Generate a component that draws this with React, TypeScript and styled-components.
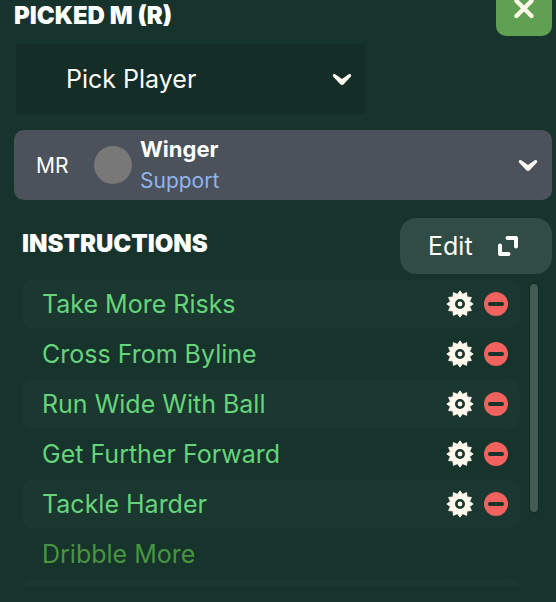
import React from "react";
import styled, { createGlobalStyle } from "styled-components";

const GlobalStyle = createGlobalStyle`
  *, *::before, *::after { box-sizing: border-box; }
  body {
    margin: 0;
    background: #16332c;
    color: #fffdf8;
    font-family: Inter, "Liberation Sans", sans-serif;
    font-size: 25px;
  }
  button, select { font: inherit; color: inherit; border: 0; margin: 0; cursor: pointer; }
  svg { display: block; flex: none; }
`;

const Panel = styled.main`
  padding: 0 4px 16px 14px;
  overflow: hidden;
`;

const Header = styled.header`
  display: flex;
  justify-content: space-between;
  align-items: flex-end;
  height: 36px;
  overflow: hidden;
`;

const Title = styled.h1`
  margin: 0;
  padding-bottom: 6px;
  font-size: 24px;
  line-height: 28px;
  font-weight: 900;
  color: #fff;
`;

const SectionTitle = styled(Title)`
  padding-bottom: 4px;
`;

const CloseButton = styled.button`
  display: grid;
  place-items: center;
  width: 56px;
  height: 56px;
  flex: none;
  padding: 0;
  border-radius: 10px;
  background: #5fa052;
`;

const PlayerPicker = styled.label`
  display: grid;
  align-items: center;
  width: 65%;
  height: 70px;
  margin: 8px 0 16px 2px;
  background: #142d27;

  > * { grid-area: 1 / 1; }
  > svg { justify-self: end; margin-right: 14px; pointer-events: none; }
`;

const PlayerSelect = styled.select`
  appearance: none;
  width: 100%;
  height: 100%;
  padding: 0 50px;
  background: transparent;
`;

const RoleButton = styled.button`
  display: flex;
  align-items: center;
  width: 100%;
  height: 70px;
  padding: 0 14px 0 22px;
  border-radius: 10px;
  background: #4b525c;
  text-align: left;
`;

const Position = styled.span`
  width: 58px;
  font-size: 21px;
`;

const Avatar = styled.span`
  width: 38px;
  height: 38px;
  border-radius: 50%;
  background: #787878;
`;

const RoleText = styled.span`
  display: flex;
  flex: 1;
  flex-direction: column;
  padding-left: 8px;
  font-size: 21px;
  line-height: 31px;
`;

const RoleName = styled.strong`
  font-size: 22px;
  font-weight: 700;
  color: #fff;
`;

const Duty = styled.span`
  color: #8fb4ee;
`;

const SectionHeader = styled.div`
  display: flex;
  justify-content: space-between;
  align-items: center;
  margin: 18px 0 6px;
  padding-left: 8px;
`;

const EditButton = styled.button`
  display: flex;
  align-items: center;
  justify-content: space-between;
  width: 152px;
  height: 56px;
  padding: 0 34px 0 28px;
  border-radius: 16px;
  background: #304c44;
`;

const ScrollArea = styled.div`
  display: flex;
  gap: 10px;
  height: 306px;
  padding: 0 14px 0 8px;
  overflow: hidden;
`;

const List = styled.ul`
  display: flex;
  flex: 1;
  flex-direction: column;
  gap: 2px;
  margin: 0;
  padding: 0;
  list-style: none;
`;

const Row = styled.li<{ $dim?: boolean }>`
  display: flex;
  align-items: center;
  gap: 10px;
  flex: none;
  height: 48px;
  padding: 0 12px 0 20px;
  border-radius: 10px;
  color: ${(p) => (p.$dim ? "#489540" : "#66d47a")};

  &:nth-child(odd) { background: #1a3830; }
`;

const RowLabel = styled.span`
  flex: 1;
  white-space: nowrap;
`;

const IconButton = styled.button`
  display: grid;
  place-items: center;
  padding: 0;
  background: transparent;
  color: #fff8ec;
`;

const ScrollThumb = styled.div`
  width: 8px;
  height: 228px;
  margin-top: 4px;
  border-radius: 4px;
  background: #415b53;
  box-shadow: 0 0 0 1px #122a24;
`;

const Chevron = () => (
  <svg width="20" height="14" viewBox="0 0 20 14" aria-hidden="true">
    <path
      d="M1.1 4.4C.1 2.9 1.7 1.2 3.2 2.2L10 7l6.8-4.8c1.5-1 3.1.7 2.1 2.2l-7.2 7.8c-1 1-2.4 1-3.4 0Z"
      fill="#fffaf2"
    />
  </svg>
);

const CloseIcon = () => (
  <svg width="22" height="22" viewBox="0 0 22 22" aria-hidden="true">
    <path d="M3.5 4 18.5 19M18.5 4 3.5 19" stroke="#fff8e8" strokeWidth="4.4" strokeLinecap="round" />
  </svg>
);

const ExpandIcon = () => (
  <svg width="20" height="20" viewBox="0 0 20 20" fill="none" aria-hidden="true">
    <path
      d="M9.5 2H18v8.5M2 9.5V18h8.5"
      stroke="#fff"
      strokeWidth="4"
      strokeLinecap="round"
      strokeLinejoin="round"
    />
  </svg>
);

const gearOutline = Array.from({ length: 24 }, (_, i) => {
  const radius = i % 2 ? 10 : 13.2;
  const angle = (i * Math.PI) / 12 - Math.PI / 2;
  return `${(14 + radius * Math.cos(angle)).toFixed(2)},${(14 + radius * Math.sin(angle)).toFixed(2)}`;
}).join(" ");

const GearIcon = () => (
  <svg width="28" height="28" viewBox="0 0 28 28" aria-hidden="true">
    <polygon points={gearOutline} fill="currentColor" stroke="currentColor" strokeWidth="0.8" strokeLinejoin="round" />
    <circle cx="14" cy="14" r="3.7" fill="currentColor" stroke="#1a352d" strokeWidth="2.6" />
  </svg>
);

const RemoveIcon = () => (
  <svg width="24" height="24" viewBox="0 0 24 24" aria-hidden="true">
    <circle cx="12" cy="12" r="12" fill="#ef625d" />
    <path d="M6 12h12" stroke="#17332c" strokeWidth="4" strokeLinecap="round" />
  </svg>
);

const instructions = [
  { name: "Take More Risks", active: true },
  { name: "Cross From Byline", active: true },
  { name: "Run Wide With Ball", active: true },
  { name: "Get Further Forward", active: true },
  { name: "Tackle Harder", active: true },
  { name: "Dribble More", active: false },
];

export default function App() {
  return (
    <>
      <GlobalStyle />
      <Panel>
        <Header>
          <Title>PICKED M (R)</Title>
          <CloseButton aria-label="Close">
            <CloseIcon />
          </CloseButton>
        </Header>
        <PlayerPicker>
          <PlayerSelect aria-label="Player">
            <option>Pick Player</option>
          </PlayerSelect>
          <Chevron />
        </PlayerPicker>
        <RoleButton aria-haspopup="listbox">
          <Position>MR</Position>
          <Avatar />
          <RoleText>
            <RoleName>Winger</RoleName>
            <Duty>Support</Duty>
          </RoleText>
          <Chevron />
        </RoleButton>
        <SectionHeader>
          <SectionTitle as="h2">INSTRUCTIONS</SectionTitle>
          <EditButton>
            Edit
            <ExpandIcon />
          </EditButton>
        </SectionHeader>
        <ScrollArea>
          <List>
            {instructions.map(({ name, active }) => (
              <Row key={name} $dim={!active}>
                <RowLabel>{name}</RowLabel>
                {active && (
                  <>
                    <IconButton aria-label={`Settings for ${name}`}>
                      <GearIcon />
                    </IconButton>
                    <IconButton aria-label={`Remove ${name}`}>
                      <RemoveIcon />
                    </IconButton>
                  </>
                )}
              </Row>
            ))}
            <Row aria-hidden="true" />
          </List>
          <ScrollThumb />
        </ScrollArea>
      </Panel>
    </>
  );
}
